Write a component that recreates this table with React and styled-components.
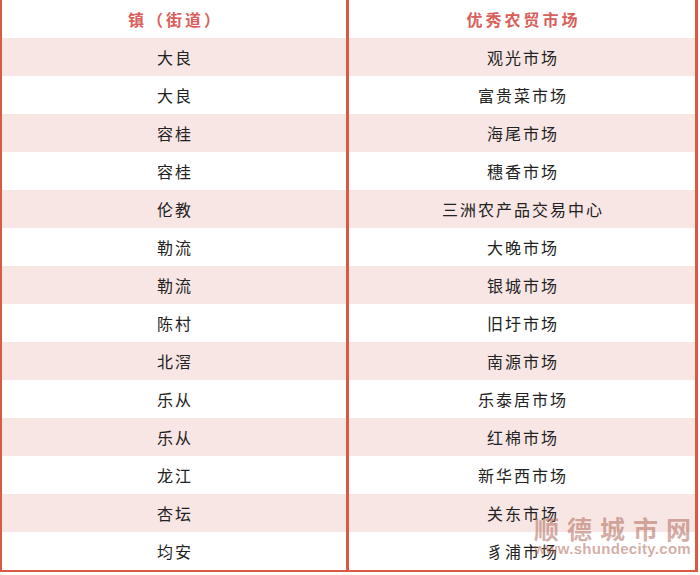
import React from 'react';
import styled, { createGlobalStyle } from 'styled-components';

const GlobalStyle = createGlobalStyle`
  html, body {
    margin: 0;
    padding: 0;
    background: #fff;
  }
  body {
    font-family: "Noto Sans CJK SC", "Liberation Sans", sans-serif;
  }
`;

const rows = [
  ['大良', '观光市场'],
  ['大良', '富贵菜市场'],
  ['容桂', '海尾市场'],
  ['容桂', '穗香市场'],
  ['伦教', '三洲农产品交易中心'],
  ['勒流', '大晚市场'],
  ['勒流', '银城市场'],
  ['陈村', '旧圩市场'],
  ['北滘', '南源市场'],
  ['乐从', '乐泰居市场'],
  ['乐从', '红棉市场'],
  ['龙江', '新华西市场'],
  ['杏坛', '关东市场'],
  ['均安', '豸浦市场'],
];

const Wrapper = styled.div`
  position: relative;
  width: 698px;
  height: 573px;
`;

const Table = styled.div`
  display: grid;
  grid-template-columns: 347px 346px;
  width: 698px;
  box-sizing: border-box;
  border-left: 2px solid #d95a44;
  border-right: 3px solid #d95a44;
  border-bottom: 2px solid #d95a44;
`;

const Cell = styled.div`
  height: 38px;
  display: flex;
  align-items: center;
  justify-content: center;
  font-size: 16px;
  letter-spacing: ${p => (p.$head ? '3px' : '2px')};
  font-weight: ${p => (p.$head ? 700 : 400)};
  color: ${p => (p.$head ? '#d9605a' : '#222')};
  background: ${p => (p.$shade ? '#f7e6e4' : '#fff')};
  border-right: ${p => (p.$left ? '3px solid #d95a44' : 'none')};
  padding-left: ${p => (p.$head ? '3px' : '2px')};
`;

const Watermark = styled.div`
  position: absolute;
  right: 7px;
  bottom: 17px;
  display: flex;
  flex-direction: column;
  align-items: center;
  color: rgba(175, 105, 90, 0.55);
  font-family: "Liberation Sans", "Noto Sans CJK SC", sans-serif;
  font-weight: 700;
  pointer-events: none;
`;

const MarkTitle = styled.div`
  font-family: "Noto Sans CJK SC", sans-serif;
  font-size: 25px;
  line-height: 26px;
  letter-spacing: 8px;
  margin-right: -8px;
`;

const MarkUrl = styled.div`
  font-size: 15px;
  line-height: 15px;
  letter-spacing: 0.3px;
`;

export default function App() {
  return (
    <>
      <GlobalStyle />
      <Wrapper>
        <Table>
          <Cell $head $left>镇（街道）</Cell>
          <Cell $head>优秀农贸市场</Cell>
          {rows.map(([town, market], i) => (
            <React.Fragment key={i}>
              <Cell $left $shade={i % 2 === 0}>{town}</Cell>
              <Cell $shade={i % 2 === 0}>{market}</Cell>
            </React.Fragment>
          ))}
        </Table>
        <Watermark>
          <MarkTitle>顺德城市网</MarkTitle>
          <MarkUrl>www.shundecity.com</MarkUrl>
        </Watermark>
      </Wrapper>
    </>
  );
}
